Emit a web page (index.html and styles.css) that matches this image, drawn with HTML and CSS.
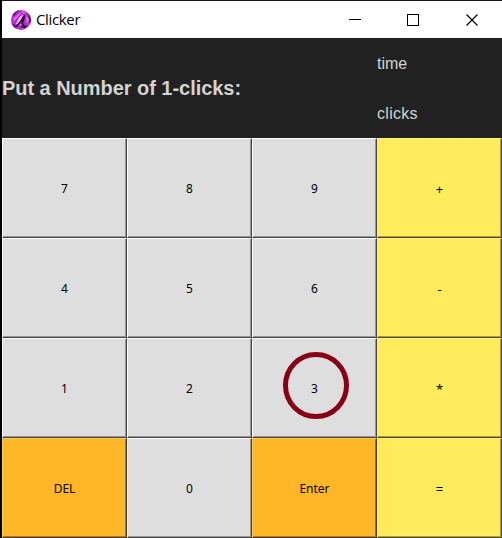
FILE: index.html
```html
<!DOCTYPE html>
<html lang="en">
<head>
<meta charset="utf-8">
<title>Clicker</title>
<link rel="stylesheet" href="styles.css">
</head>
<body>
<main class="window">
  <header class="titlebar">
    <svg class="logo" width="20" height="20" viewBox="0 0 20 20">
      <defs>
        <clipPath id="disc"><circle cx="10" cy="10" r="10"/></clipPath>
      </defs>
      <g clip-path="url(#disc)">
        <path fill="#b02fcb" d="M0 0h20v20H0z"/>
        <path fill="#5a1472" d="M0 4l4-4h5L6 2 3 6zM17 3l3 3v8l-2-2 0-4zM0 13l4 2 2 5H1z"/>
        <path fill="#e768f0" d="M2 9l5-5 4-2-5 6-3 3zM15 6l3 3-2 5-1-4zM10 1l5 1-2 2zM14 17l4-3-1 4z"/>
        <path fill="#f7c4fa" d="M5 14l3-6 4-4-2 6-3 4z"/>
        <path fill="#25062f" d="M4 17l5-6 5-7 0 4-2 5 2 3 4-1-4 3-4-1 0-5-4 5z"/>
        <path fill="#f3a8f7" d="M11 10l-1 4 2 2-3-1z"/>
      </g>
    </svg>
    <h1 class="title">Clicker</h1>
    <svg class="controls" width="130" height="14" viewBox="0 0 130 14" fill="none" stroke="#000" shape-rendering="crispEdges">
      <path d="M0 6.5h12M58.5 1.5h11v11h-11z"/>
      <path d="M117.5 1.5l11 11M128.5 1.5l-11 11" shape-rendering="auto" stroke-width="1.15"/>
    </svg>
  </header>
  <section class="display">
    <p class="prompt">Put a Number of 1-clicks:</p>
    <div class="stats"><span>time</span><span class="count">clicks</span></div>
  </section>
  <section class="keys">
    <button>7</button><button>8</button><button>9</button><button class="op">+</button>
    <button>4</button><button>5</button><button>6</button><button class="op">-</button>
    <button>1</button><button>2</button><button class="marked">3<svg class="ring" width="66" height="67" viewBox="0 0 66 67"><ellipse cx="33" cy="33.5" rx="30.5" ry="31" fill="none" stroke="#880015" stroke-width="5"/></svg></button><button class="op">*</button>
    <button class="action">DEL</button><button>0</button><button class="action">Enter</button><button class="op">=</button>
  </section>
</main>
</body>
</html>
```
FILE: styles.css
```css
* { box-sizing: border-box; }
body { margin: 0; background: #000; }
.window {
  width: 502px;
  height: 538px;
  padding: 1px 0 0 2px;
  background: linear-gradient(90deg, #000 2px, #1b181c 2px);
  font-family: "Noto Sans", sans-serif;
  overflow: hidden;
}
.titlebar {
  display: flex;
  align-items: center;
  height: 37px;
  padding: 0 23px 0 9px;
  background: #fff;
}
.title {
  margin: 0 0 2px 5px;
  font: 400 15px/20px "Open Sans", sans-serif;
  letter-spacing: -0.35px;
  color: #000;
}
.controls { margin-left: auto; }
.display {
  display: grid;
  grid-template-columns: 375px 125px;
  height: 100px;
  background: #212121;
  color: #d3d3d3;
  font-family: "Liberation Sans", sans-serif;
}
.prompt {
  margin: 0;
  font-size: 20px;
  font-weight: 700;
  letter-spacing: -0.04px;
  line-height: 100px;
  white-space: nowrap;
}
.stats {
  display: grid;
  grid-template-rows: 50px 50px;
  font-size: 16px;
  line-height: 52px;
}
.count { letter-spacing: 0.3px; }
.keys {
  display: grid;
  grid-template-columns: repeat(4, 125px);
  grid-template-rows: repeat(4, 100px);
}
button {
  --face: #dedede;
  --light: #fff;
  --shade: #979797;
  --edge: #454545;
  position: relative;
  margin: 0;
  padding: 2px 0 0;
  border: 1px solid;
  border-color: var(--light) var(--edge) var(--edge) var(--light);
  border-radius: 0;
  background: var(--face);
  box-shadow: inset -1px -1px var(--shade);
  color: #000;
  font: 12px/16px "Noto Sans", sans-serif;
}
.op { --face: #ffeb5b; --light: #fff07c; --shade: #aa9d3d; --edge: #504a1d; font-size: 13px; }
.action { --face: #ffb627; --light: #ffcc55; --shade: #aa791a; --edge: #50390c; }
.ring { position: absolute; left: 30px; top: 13px; }
```
